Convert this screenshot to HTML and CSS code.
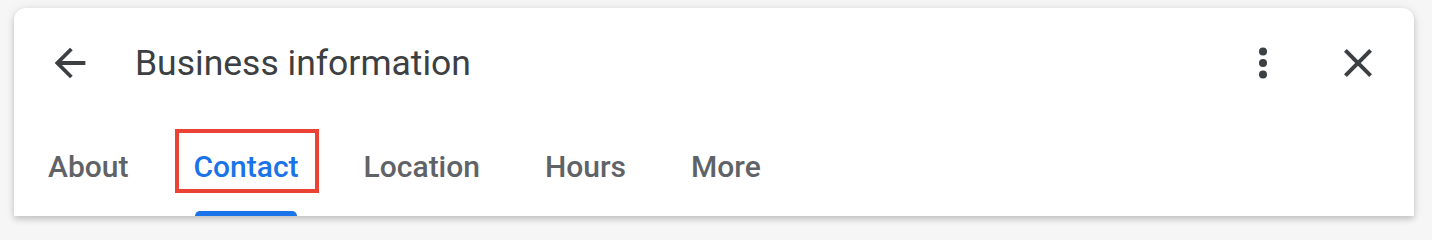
FILE: index.html
```html
<!DOCTYPE html>
<html lang="en">
<head>
<meta charset="utf-8">
<title>Business information</title>
<link rel="stylesheet" href="styles.css">
</head>
<body>
<div class="page">
  <section class="dialog">
    <header class="dialog-header">
      <button class="icon-btn back" aria-label="Back">
        <svg viewBox="0 0 24 24" width="46" height="46"><path d="M20 11H7.83l5.59-5.59L12 4l-8 8 8 8 1.41-1.41L7.83 13H20v-2z"/></svg>
      </button>
      <h1 class="title">Business information</h1>
      <div class="actions">
        <button class="icon-btn more" aria-label="More options">
          <svg viewBox="0 0 24 24" width="46" height="46"><circle cx="12" cy="6" r="2.1"/><circle cx="12" cy="12" r="2.1"/><circle cx="12" cy="18" r="2.1"/></svg>
        </button>
        <button class="icon-btn close" aria-label="Close">
          <svg viewBox="0 0 24 24" width="48" height="48"><path d="M19 6.41L17.59 5 12 10.59 6.41 5 5 6.41 10.59 12 5 17.59 6.41 19 12 13.41 17.59 19 19 17.59 13.41 12z"/></svg>
        </button>
      </div>
    </header>
    <nav class="tabs">
      <a class="tab">About</a>
      <a class="tab active"><span class="highlight">Contact</span></a>
      <a class="tab">Location</a>
      <a class="tab">Hours</a>
      <a class="tab">More</a>
    </nav>
  </section>
</div>
</body>
</html>
```
FILE: styles.css
```css
* { box-sizing: border-box; }
html, body { margin: 0; padding: 0; }
body {
  width: 1432px;
  height: 240px;
  overflow: hidden;
  background: #f6f6f6;
  font-family: Roboto, "Noto Sans", Arial, sans-serif;
}
.page {
  padding: 8px 18px 0 14px;
}
.dialog {
  width: 1400px;
  background: #fff;
  border-radius: 12px 12px 0 0;
  box-shadow: 0 3px 6px rgba(0,0,0,0.2), 0 0 14px rgba(0,0,0,0.06);
}
.dialog-header {
  display: flex;
  align-items: center;
  height: 110px;
  padding: 0 32px 0 33px;
}
.icon-btn {
  border: 0;
  background: none;
  padding: 0;
  display: flex;
  align-items: center;
  justify-content: center;
  fill: #3c4043;
}
.title {
  margin: 0 0 0 42px;
  font-weight: 400;
  font-size: 35.5px;
  color: #3c4043;
  flex: 1;
}
.actions {
  display: flex;
  align-items: center;
  gap: 48px;
}
.tabs {
  display: flex;
  height: 98px;
  padding-left: 20px;
  gap: 37px;
}
.tab {
  position: relative;
  height: 98px;
  padding: 31px 14px 0;
  font-size: 30px;
  line-height: 36px;
  color: #5f6368;
  font-weight: 500;
}
.tab.active { color: #1a73e8; }
.tab.active::after {
  content: "";
  position: absolute;
  left: 16px;
  right: 16px;
  bottom: 0;
  height: 5px;
  background: #1a73e8;
  border-radius: 5px 5px 0 0;
}
.highlight {
  display: inline-block;
  position: relative;
}
.highlight::before {
  content: "";
  position: absolute;
  left: -18px;
  right: -20px;
  top: -20px;
  bottom: -8px;
  border: 4px solid #ea4335;
}
```
